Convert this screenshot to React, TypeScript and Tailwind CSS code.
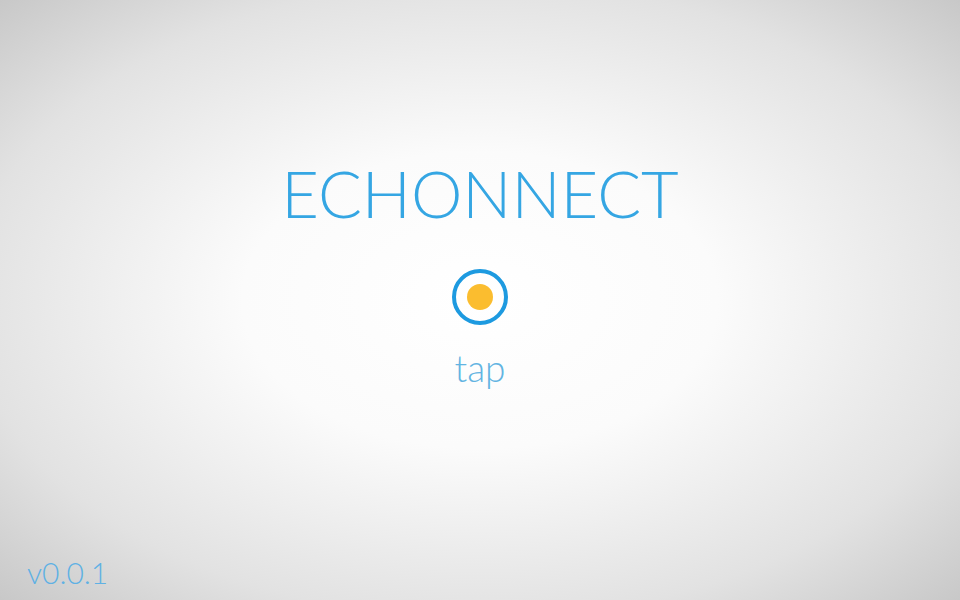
export default function App() {
  return (
    <div
      className="relative flex h-[600px] w-[960px] flex-col items-center bg-[radial-gradient(ellipse_at_center,#ffffff_0%,#fbfbfb_35%,#e2e2e2_75%,#c8c8c8_100%)]"
      style={{ fontFamily: "Lato, 'Noto Sans', sans-serif" }}
    >
      <h1 className="mt-[153px] text-[65px] font-light leading-[80px] text-[#35a6e3]">
        ECHONNECT
      </h1>
      <button className="mt-[36px] flex h-[56px] w-[56px] items-center justify-center rounded-full border-4 border-[#1d9ae0]">
        <span className="h-[26px] w-[26px] rounded-full bg-[#fbbd2f]" />
      </button>
      <div className="mt-[19px] text-[37px] font-light leading-[48px] text-[#62b4e2]">tap</div>
      <div className="absolute bottom-[10px] left-[27px] text-[30px] font-light leading-[36px] text-[#5fb1e4]">
        v0.0.1
      </div>
    </div>
  );
}
